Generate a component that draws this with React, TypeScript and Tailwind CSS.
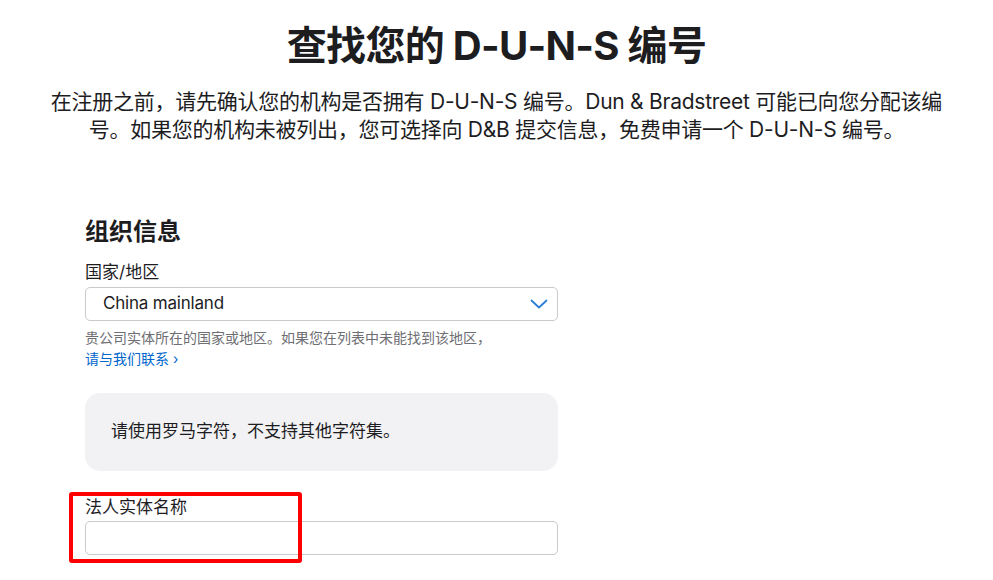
import React from "react";

export default function App() {
  const font = { fontFamily: 'Inter, "Noto Sans CJK SC", sans-serif' };
  return (
    <div className="w-[993px] h-[580px] bg-white overflow-hidden text-[#1d1d1f]" style={font}>
      <h1 className="pt-[22px] text-center text-[40px] leading-[48px] font-bold tracking-[-0.7px]">
        查找您的 D-U-N-S 编号
      </h1>
      <p className="mt-[18px] text-center text-[21px] leading-[28px] tracking-[-0.25px]">
        在注册之前，请先确认您的机构是否拥有 D-U-N-S 编号。Dun &amp; Bradstreet 可能已向您分配该编
        <br />
        号。如果您的机构未被列出，您可选择向 D&amp;B 提交信息，免费申请一个 D-U-N-S 编号。
      </p>
      <div className="pl-[85px] mt-[72px]">
        <div className="w-[473px] flex flex-col">
          <h2 className="text-[24px] leading-[32px] font-bold">组织信息</h2>
          <label className="mt-[12px] text-[17px] leading-[24px]">国家/地区</label>
          <div className="mt-[3px] h-[34px] border border-[#c9c9ce] rounded-[5px] flex items-center justify-between pl-[17px] pr-[9px]">
            <span className="text-[17px] tracking-[-0.2px]">China mainland</span>
            <svg width="18" height="10" viewBox="0 0 18 10" fill="none">
              <path d="M1.5 1.5 L9 8.5 L16.5 1.5" stroke="#2b7fd6" strokeWidth="1.8" strokeLinecap="round" strokeLinejoin="round" />
            </svg>
          </div>
          <p className="mt-[6px] text-[14px] leading-[21px] text-[#6e6e73]">
            贵公司实体所在的国家或地区。如果您在列表中未能找到该地区，
            <br />
            <a className="text-[#0066cc]">请与我们联系 ›</a>
          </p>
          <div className="mt-[24px] h-[78px] rounded-[15px] bg-[#f2f2f4] flex items-center pl-[26px] text-[17px]">
            请使用罗马字符，不支持其他字符集。
          </div>
          <div className="relative mt-[24px] flex flex-col">
            <label className="text-[17px] leading-[24px]">法人实体名称</label>
            <div className="mt-[2px] h-[34px] border border-[#c9c9ce] rounded-[5px] bg-white" />
            <div className="absolute left-[-16px] top-[-3px] w-[233px] h-[71px] border-[4px] border-[#ff0000] rounded-[3px]" />
          </div>
        </div>
      </div>
    </div>
  );
}
